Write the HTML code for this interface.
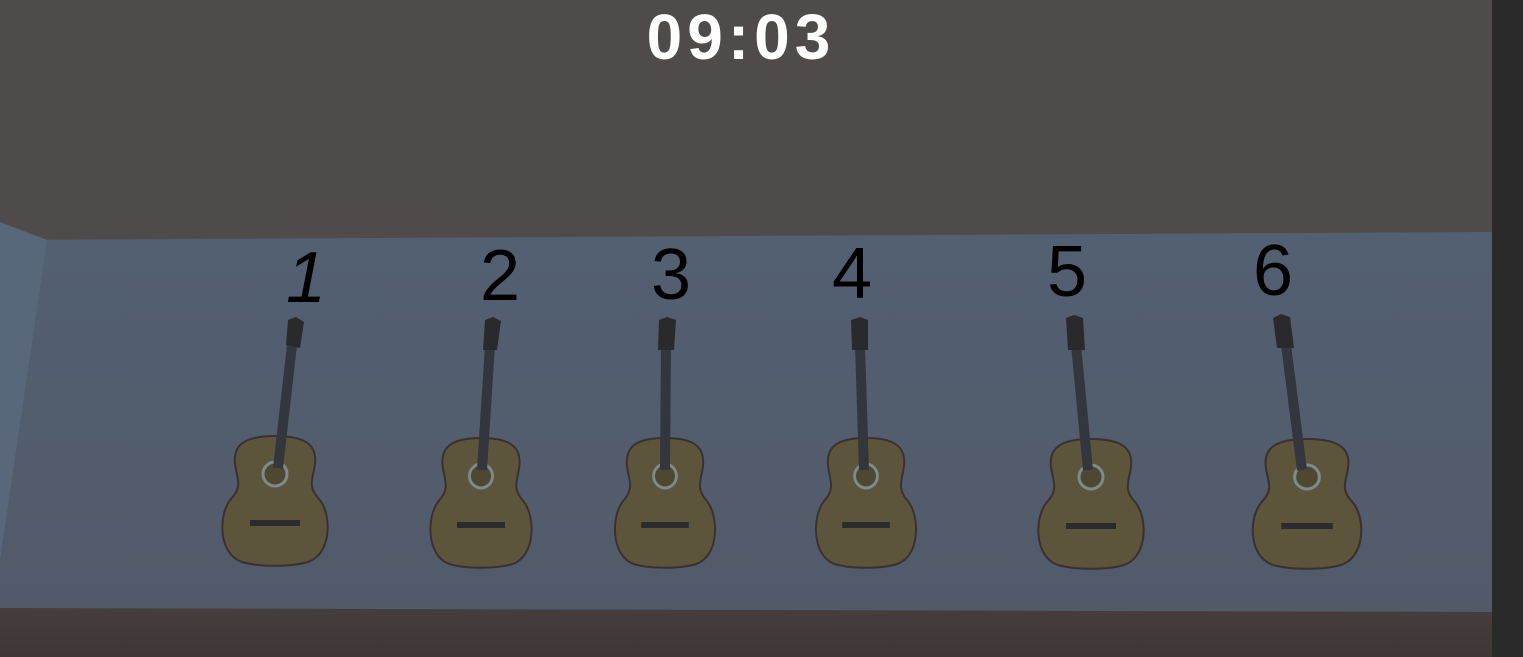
<!DOCTYPE html>
<html><head><meta charset="utf-8"><style>
html,body{margin:0;padding:0;width:1523px;height:657px;overflow:hidden;background:#4f4b4a}
svg{display:block}
</style></head><body>
<svg width="1523" height="657" viewBox="0 0 1523 657" xmlns="http://www.w3.org/2000/svg">
<defs>
<linearGradient id="wall" x1="0" y1="0" x2="0" y2="1">
<stop offset="0" stop-color="#536072"/><stop offset="1" stop-color="#515a69"/>
</linearGradient>
<linearGradient id="floor" x1="0" y1="0" x2="0" y2="1">
<stop offset="0" stop-color="#453e3d"/><stop offset="1" stop-color="#3f3636"/>
</linearGradient>
<g id="body">
<path d="M0,-128 C-32,-128 -42,-118 -40,-100 C-38,-85 -32,-78 -44,-65 C-57,-50 -57,-10 -33,-2 C-16,3 16,3 33,-2 C57,-10 57,-50 44,-65 C32,-78 38,-85 40,-100 C42,-118 32,-128 0,-128 Z" fill="#5d553b" stroke="#3a3030" stroke-width="2"/>
<circle cx="0" cy="-90" r="12" fill="#4e4832" stroke="#7f8a8c" stroke-width="3"/>
<rect x="-25" y="-44" width="50" height="6" fill="#2b2a2c" stroke="none"/>
</g>
</defs>
<rect width="1523" height="657" fill="#4f4b4a"/>
<polygon points="0,240 1492,232 1492,612 0,608" fill="url(#wall)"/>
<polygon points="0,222 47,240 0,560" fill="#58677a"/>
<polygon points="0,608 1492,612 1492,657 0,657" fill="url(#floor)"/>
<rect x="1492" y="0" width="31" height="657" fill="#2a2a2a"/>
<text x="741" y="59" text-anchor="middle" font-family="Liberation Sans, sans-serif" font-weight="bold" font-size="64" letter-spacing="5" fill="#fff">09:03</text>
<g font-family="Liberation Sans, sans-serif" font-size="72" fill="#000" text-anchor="middle">
<text x="306" y="302" font-style="italic">1</text>
<text x="500" y="300">2</text>
<text x="671" y="299">3</text>
<text x="852" y="298">4</text>
<text x="1067" y="296">5</text>
<text x="1273" y="295">6</text>
</g>
<use href="#body" transform="translate(275,564)"/>
<use href="#body" transform="translate(481,566) scale(0.96,1)"/>
<use href="#body" transform="translate(665,566) scale(0.95,1)"/>
<use href="#body" transform="translate(866,566) scale(0.95,1)"/>
<use href="#body" transform="translate(1091,567)"/>
<use href="#body" transform="translate(1307,567) scale(1.03,1)"/>
<g stroke="#34363d" stroke-width="10">
<line x1="278" y1="468" x2="292" y2="345"/>
<line x1="482" y1="470" x2="490" y2="345"/>
<line x1="665" y1="470" x2="666" y2="345"/>
<line x1="864" y1="470" x2="860" y2="345"/>
<line x1="1088" y1="470" x2="1076" y2="345"/>
<line x1="1302" y1="470" x2="1286" y2="345"/>
</g>
<g fill="#2a2a2d">
<path d="M286,345 L288,320 L296,317 L304,322 L300,348 Z"/>
<path d="M483,350 L485,320 L493,317 L501,321 L497,350 Z"/>
<path d="M658,350 L659,320 L667,317 L676,320 L674,350 Z"/>
<path d="M852,350 L851,320 L860,317 L868,320 L868,350 Z"/>
<path d="M1068,350 L1066,318 L1074,315 L1083,318 L1085,350 Z"/>
<path d="M1277,348 L1273,318 L1281,314 L1290,317 L1294,348 Z"/>
</g>
</svg>
</body></html>
